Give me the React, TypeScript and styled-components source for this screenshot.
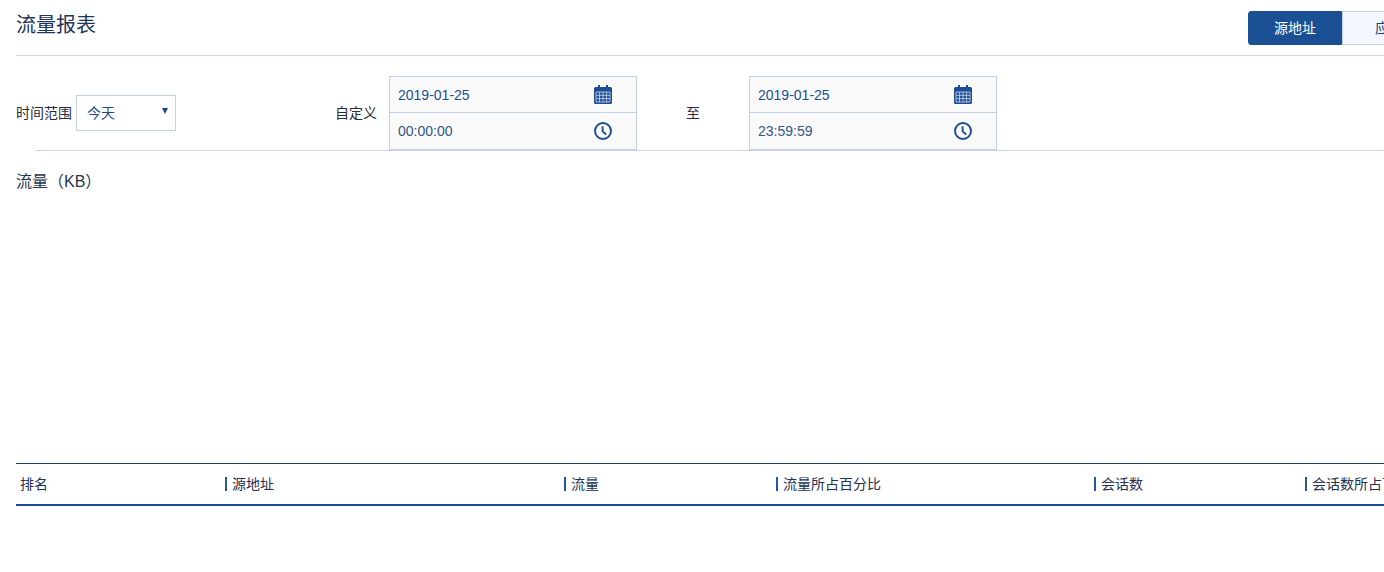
import styled, { createGlobalStyle } from "styled-components";

const GlobalStyle = createGlobalStyle`
  html, body {
    margin: 0;
    padding: 0;
    background: #fff;
    overflow: hidden;
  }
  body {
    font-family: "Liberation Sans", "Noto Sans CJK SC", sans-serif;
    font-size: 14px;
    color: #22304a;
  }
`;

const Page = styled.div`
  width: 1500px;
  height: 572px;
  overflow: hidden;
  padding-left: 16px;
  box-sizing: border-box;
`;

const Header = styled.header`
  display: flex;
  align-items: flex-start;
  height: 55px;
  border-bottom: 1px solid #cfd6e2;
`;

const Title = styled.h1`
  margin: 0;
  padding-top: 11px;
  font-size: 20px;
  line-height: 28px;
  font-weight: 400;
  color: #1f3558;
`;

const Tabs = styled.div`
  display: flex;
  margin-left: 1152px;
  margin-top: 11px;
  flex: none;
`;

const Tab = styled.div<{ $active?: boolean }>`
  width: 94px;
  height: 34px;
  box-sizing: border-box;
  padding-bottom: 2px;
  display: flex;
  align-items: center;
  justify-content: center;
  font-size: 14px;
  background: ${(p) => (p.$active ? "#1b4f94" : "#f2f6fd")};
  color: ${(p) => (p.$active ? "#fff" : "#1f3f78")};
  border: 1px solid ${(p) => (p.$active ? "#1b4f94" : "#c3d0e6")};
  border-radius: ${(p) => (p.$active ? "3px 0 0 3px" : "0")};
`;

const FilterRow = styled.div`
  display: flex;
  align-items: center;
  padding-top: 20px;
  height: 74px;
`;

const FieldLabel = styled.span<{ $left?: number }>`
  font-size: 14px;
  color: #2a2a3a;
  margin-left: ${(p) => p.$left ?? 0}px;
  padding-bottom: 2px;
  white-space: nowrap;
`;

const SelectBox = styled.div`
  width: 100px;
  height: 36px;
  box-sizing: border-box;
  margin-left: 4px;
  padding: 0 7px 2px 10px;
  display: flex;
  align-items: center;
  justify-content: space-between;
  border: 1px solid #c3d0e6;
  color: #1f4a8a;
  font-size: 14px;
`;

const Caret = styled.span`
  width: 0;
  height: 0;
  margin-bottom: 2px;
  border-left: 3px solid transparent;
  border-right: 3px solid transparent;
  border-top: 6px solid #1b4589;
`;

const DateBlock = styled.div<{ $left: number }>`
  width: 248px;
  height: 74px;
  box-sizing: border-box;
  margin-left: ${(p) => p.$left}px;
  border: 1px solid #c3d0e6;
  background: #f9f9f9;
  display: grid;
  grid-template-rows: 36px 1fr;
`;

const DateRow = styled.div<{ $first?: boolean }>`
  display: flex;
  align-items: center;
  justify-content: space-between;
  padding: 0 24px 0 8px;
  font-size: 14px;
  color: ${(p) => (p.$first ? "#1b4f94" : "#34558a")};
  border-bottom: ${(p) => (p.$first ? "1px solid #c3d0e6" : "none")};
`;

const Divider = styled.div`
  margin-left: 20px;
  height: 1px;
  background: #c9d3e3;
`;

const SectionTitle = styled.h2`
  margin: 0;
  padding-top: 21px;
  height: 291px;
  box-sizing: border-box;
  font-size: 16px;
  line-height: 20px;
  font-weight: 400;
  color: #27364f;
`;

const TableHead = styled.div`
  display: grid;
  grid-template-columns: 209px 339px 212px 318px 211px 211px;
  align-items: center;
  height: 40px;
  border-top: 1px solid #1f3f70;
  border-bottom: 2px solid #1b4a8f;
  margin-top: 21px;
`;

const HeadCell = styled.div<{ $first?: boolean }>`
  display: flex;
  align-items: center;
  box-sizing: border-box;
  font-size: 14px;
  color: #26304f;
  white-space: nowrap;
  padding-left: ${(p) => (p.$first ? "4px" : "5px")};
  padding-bottom: 2px;
  height: 14px;
  border-left: ${(p) => (p.$first ? "none" : "2px solid #25599b")};
`;

const CalendarIcon = () => (
  <svg width="18" height="19" viewBox="1 1 18 19">
    <path
      fill="#1d4d95"
      d="M2.5 3H5V1.6a1 1 0 0 1 2 0V3h6V1.6a1 1 0 0 1 2 0V3h2.5A1.5 1.5 0 0 1 19 4.5v14a1.5 1.5 0 0 1-1.5 1.5h-15A1.5 1.5 0 0 1 1 18.5v-14A1.5 1.5 0 0 1 2.5 3z"
    />
    <path
      fill="none"
      stroke="#b9c9e3"
      strokeWidth="0.9"
      d="M3 8h14v10H3zM3 11.3h14M3 14.6h14M6.5 8v10M10 8v10M13.5 8v10"
    />
  </svg>
);

const ClockIcon = () => (
  <svg width="18" height="18" viewBox="0 0 18 18">
    <circle cx="9" cy="9" r="8" fill="none" stroke="#1d4d95" strokeWidth="2" />
    <path d="M8.6 4.2v5.2l3.6 3" fill="none" stroke="#1d4d95" strokeWidth="1.9" />
  </svg>
);

const columns = ["排名", "源地址", "流量", "流量所占百分比", "会话数", "会话数所占百分比"];

const dates = [
  { left: 12, day: "2019-01-25", time: "00:00:00" },
  { left: 49, day: "2019-01-25", time: "23:59:59" },
];

export default function App() {
  return (
    <Page>
      <GlobalStyle />
      <Header>
        <Title>流量报表</Title>
        <Tabs>
          <Tab $active>源地址</Tab>
          <Tab>应用</Tab>
        </Tabs>
      </Header>
      <FilterRow>
        <FieldLabel>时间范围</FieldLabel>
        <SelectBox>
          今天
          <Caret />
        </SelectBox>
        <FieldLabel $left={159}>自定义</FieldLabel>
        <DateBlock $left={dates[0].left}>
          <DateRow $first>
            {dates[0].day}
            <CalendarIcon />
          </DateRow>
          <DateRow>
            {dates[0].time}
            <ClockIcon />
          </DateRow>
        </DateBlock>
        <FieldLabel $left={49}>至</FieldLabel>
        <DateBlock $left={dates[1].left}>
          <DateRow $first>
            {dates[1].day}
            <CalendarIcon />
          </DateRow>
          <DateRow>
            {dates[1].time}
            <ClockIcon />
          </DateRow>
        </DateBlock>
      </FilterRow>
      <Divider />
      <SectionTitle>流量（KB）</SectionTitle>
      <TableHead>
        {columns.map((name, i) => (
          <HeadCell key={name} $first={i === 0}>
            {name}
          </HeadCell>
        ))}
      </TableHead>
    </Page>
  );
}
